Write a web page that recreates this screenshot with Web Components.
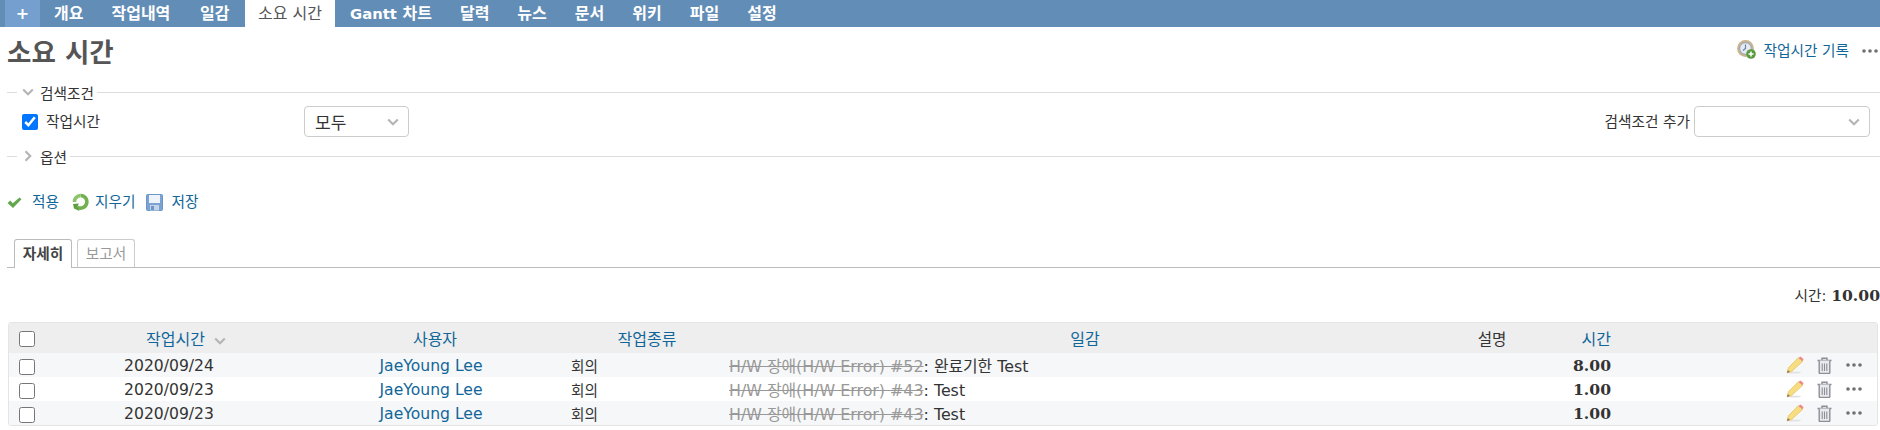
<!DOCTYPE html>
<html lang="ko">
<head>
<meta charset="utf-8">
<title>소요 시간</title>
<style>
  html, body { margin: 0; padding: 0; background: #fff; }
  body { font-family: "DejaVu Sans", "Noto Sans CJK KR", sans-serif; font-size: 14.67px; color: #333; overflow: hidden; }
</style>
</head>
<body>
<top-menu></top-menu>
<page-head></page-head>
<filter-group label="검색조건" open>
  <filter-row></filter-row>
</filter-group>
<filter-group label="옵션"></filter-group>
<query-actions></query-actions>
<view-tabs></view-tabs>
<total-line></total-line>
<time-table></time-table>

<script>
const icons = {
  chevronDown: `<svg width="12" height="8" viewBox="0 0 12 8"><path d="M1.200 1.500 6 6.200l4.800-4.700" fill="none" stroke="#b5b5b5" stroke-width="2.200"/></svg>`,
  chevronRight: `<svg width="8" height="12" viewBox="0 0 8 12"><path d="M1.500 1.200 6.200 6l-4.700 4.800" fill="none" stroke="#b5b5b5" stroke-width="2.200"/></svg>`,
  dots: `<svg width="16" height="4" viewBox="0 0 16 4"><g fill="#707070"><circle cx="2" cy="2" r="1.800"/><circle cx="8" cy="2" r="1.800"/><circle cx="14" cy="2" r="1.800"/></g></svg>`,
  clock: `<svg width="19" height="19" viewBox="0 0 19 19"><circle cx="8.500" cy="8.500" r="8.400" fill="#c9b48c"/><circle cx="8.500" cy="8.500" r="5.800" fill="#e4ebf4" stroke="#8ea5c4"/><path d="M8.500 4.500v4l-2.500 2" fill="none" stroke="#6b7f99" stroke-width="1.200"/><circle cx="14" cy="14" r="4.800" fill="#5c9a3e"/><path d="M14 11.500v5M11.500 14h5" stroke="#fff" stroke-width="1.500"/></svg>`,
  check: `<svg width="15" height="13" viewBox="0 0 15 13"><path d="M.5 7 3.300 4.600 5.800 7.200 12.500 1.500 14.500 3.200 6 12z" fill="#62a84e"/></svg>`,
  reload: `<svg width="17" height="19" viewBox="0 0 17 19"><path d="M8.500 2.500a6.300 6.300 0 1 1-3.200 11.700" fill="none" stroke="#72b050" stroke-width="3.600"/><path d="M8.500 2.500A6.300 6.300 0 0 0 2.400 9" fill="none" stroke="#8cc46a" stroke-width="3.600"/><path d="M1 11 6.800 10.500 5.500 14 7.500 18 2 15.500z" fill="#5f9f42"/></svg>`,
  save: `<svg width="17" height="17" viewBox="0 0 17 17"><rect x=".5" y=".5" width="16" height="16" rx="1" fill="#7aa3d4" stroke="#6a96c8"/><rect x="3" y="1" width="11" height="8" fill="#eef3f9"/><rect x="4" y="11" width="9" height="5.500" fill="#c4d3e6"/><rect x="5" y="12" width="3" height="4" fill="#6d96c8"/></svg>`,
  pencil: `<svg width="18" height="18" viewBox="0 0 18 18"><ellipse cx="8" cy="16.500" rx="7" ry="1" fill="#e2e2e2"/><path d="M12.500 1.500 16.500 5.500 5.500 15.500 1 17 2.500 11.500z" fill="#f7dd80" stroke="#e0c060" stroke-width=".7"/><path d="M12.500 2 14.500.5 17.500 3 16.500 5.500z" fill="#f08a8a"/><path d="M1 17 1.800 14 4 16z" fill="#8a7a50"/></svg>`,
  trash: `<svg width="15" height="17" viewBox="0 0 15 17"><g fill="none" stroke="#8e8e96" stroke-width="1.400"><path d="M.5 3.500h14M5 3.200V1.200h5v2"/><path d="M2.200 3.500v12a1 1 0 0 0 1 1h8.600a1 1 0 0 0 1-1v-12" fill="#e8eaee"/><path d="M5.200 6.500v7.500M7.500 6.500v7.500M9.800 6.500v7.500" stroke-width="1.100"/></g></svg>`
};

const tpl = (html) => {
  const t = document.createElement("template");
  t.innerHTML = html;
  return t;
};

class Base extends HTMLElement {
  constructor() {
    super();
    this.attachShadow({ mode: "open" });
    this.shadowRoot.append(this.constructor.template.content.cloneNode(true));
  }
}

class TopMenu extends Base {
  static template = tpl(`
    <style>
      :host { display: flex; height: 27px; background: #628db6; padding-left: 5px; font: bold 16px "DejaVu Sans", "Noto Sans CJK KR", sans-serif; line-height: 27px; color: #fff; box-sizing: border-box; }
      a { display: block; padding: 0 14px; white-space: nowrap; }
      .new { background: #759fcf; padding: 0; width: 35px; text-align: center; }
      .wide { padding-right: 15.700px; }
      .on { background: #fff; color: #555; font-weight: normal; box-sizing: border-box; width: 90px; padding: 0; text-align: center; margin: 0 1px 0 1.600px; }
      .lat { font-size: 14.800px; }
    </style>
    <a class="new">+</a><a>개요</a><a class="wide">작업내역</a><a>일감</a><a class="on">소요 시간</a><a><span class="lat">Gantt</span> 차트</a><a>달력</a><a>뉴스</a><a>문서</a><a>위키</a><a>파일</a><a>설정</a>`);
}

class PageHead extends Base {
  static template = tpl(`
    <style>
      :host { display: flex; justify-content: space-between; height: 52px; padding: 8px 2px 0 7px; box-sizing: border-box; }
      h2 { margin: 0; font: bold 26.500px/36px "DejaVu Sans", "Noto Sans CJK KR", sans-serif; color: #555; }
      .right { display: flex; align-items: center; height: 26px; margin-top: 1px; }
      a { color: #169; margin: 0 13px 0 7px; }
      svg { display: block; }
      .dots { margin-top: 4px; }
    </style>
    <h2>소요 시간</h2>
    <div class="right">${icons.clock}<a>작업시간 기록</a><span class="dots">${icons.dots}</span></div>`);
}

class FilterGroup extends Base {
  static template = tpl(`
    <style>
      :host { display: block; padding-left: 7px; }
      .legend { display: flex; align-items: center; height: 26px; color: #333; }
      .tick { width: 10px; height: 1px; background: #ddd; }
      .rule { flex: 1; height: 1px; background: #ddd; margin-left: 3px; }
      .arrow { box-sizing: border-box; width: 23px; padding-right: 1px; display: flex; justify-content: center; }
      svg { display: block; }
    </style>
    <div class="legend"><span class="tick"></span><span class="arrow"></span><span class="text"></span><span class="rule"></span></div>
    <slot></slot>`);

  connectedCallback() {
    const root = this.shadowRoot;
    root.querySelector(".text").textContent = this.getAttribute("label");
    root.querySelector(".arrow").innerHTML = this.hasAttribute("open") ? icons.chevronDown : icons.chevronRight;
  }
}

class FilterRow extends Base {
  static template = tpl(`
    <style>
      :host { display: flex; align-items: center; height: 33px; margin: 0 0 5px -7px; }
      input { width: 16px; height: 16px; margin: 0 8px 0 22px; accent-color: #0075ff; }
      .name { width: 258px; padding-bottom: 3px; }
      .sel { box-sizing: border-box; height: 31px; border: 1px solid #ccc; border-radius: 4px; display: flex; align-items: center; justify-content: space-between; padding: 0 9px 0 10px; background: #fff; }
      .op { width: 105px; font-size: 17px; }
      .add { margin-left: auto; padding-bottom: 3px; }
      .pick { width: 176px; margin: 0 10px 0 4px; }
      svg { display: block; }
    </style>
    <input type="checkbox" checked><span class="name">작업시간</span>
    <div class="sel op"><span>모두</span>${icons.chevronDown}</div>
    <span class="add">검색조건 추가</span>
    <div class="sel pick"><span></span>${icons.chevronDown}</div>`);
}

class QueryActions extends Base {
  static template = tpl(`
    <style>
      :host { display: flex; align-items: center; height: 24px; margin-top: 21px; padding-left: 7px; color: #169; }
      a { padding-bottom: 3px; }
      a.a { margin: 0 13px 0 10px; }
      a.b { margin: 0 11px 0 6px; }
      a.c { margin: 0 0 0 8px; }
      svg { display: block; }
    </style>
    ${icons.check}<a class="a">적용</a>${icons.reload}<a class="b">지우기</a>${icons.save}<a class="c">저장</a>`);
}

class ViewTabs extends Base {
  static template = tpl(`
    <style>
      :host { display: flex; align-items: flex-end; gap: 5px; height: 29px; margin: 24px 0 0 7px; padding-left: 7px; border-bottom: 1px solid #bbb; }
      a { box-sizing: border-box; width: 58px; height: 28px; border: 1px solid #ccc; border-bottom: 0; border-radius: 3px 3px 0 0; text-align: center; line-height: 27px; color: #999; background: #fff; }
      .on { color: #444; font-weight: bold; border-color: #bbb; height: 29px; margin-bottom: -1px; padding-bottom: 1px; }
    </style>
    <a class="on">자세히</a><a>보고서</a>`);
}

class TotalLine extends Base {
  static template = tpl(`
    <style>
      :host { display: block; height: 54px; box-sizing: border-box; padding-top: 18px; text-align: right; line-height: 20px; }
      b { font: bold 15.600px "DejaVu Serif", serif; }
    </style>
    시간: <b>10.00</b>`);
}

class TimeTable extends Base {
  static template = tpl(`
    <style>
      :host { display: block; margin: 0 2px 0 8px; border: 1px solid #e4e4e4; border-radius: 3px; overflow: hidden; --cols: 34px 252px 272px 160px 748px 34px 106px 1fr; }
      .h { display: grid; grid-template-columns: var(--cols); align-items: center; height: 30px; background: #eee; color: #169; font-size: 16px; }
      input { width: 16px; height: 16px; margin: 2px 0 0 10px; display: block; }
      .c { text-align: center; white-space: nowrap; }
      .dark { color: #333; font-size: 15.600px; }
      .hrs { text-align: right; padding-right: 4px; }
      .sort { display: inline-block; margin-left: 9px; }
      .date { padding-left: 34px; }
      .user { padding-left: 8px; }
      .issue { padding-right: 32px; }
      svg { display: block; }
    </style>
    <div class="h">
      <span><input type="checkbox"></span>
      <span class="c date">작업시간<span class="sort">${icons.chevronDown}</span></span>
      <span class="c user">사용자</span>
      <span class="c">작업종류</span>
      <span class="c issue">일감</span>
      <span class="c dark">설명</span>
      <span class="hrs">시간</span>
      <span></span>
    </div>
    <time-row date="2020/09/24" issue="H/W 장애(H/W Error) #52" title="완료기한 Test" hours="8.00"></time-row>
    <time-row date="2020/09/23" issue="H/W 장애(H/W Error) #43" title="Test" hours="1.00"></time-row>
    <time-row date="2020/09/23" issue="H/W 장애(H/W Error) #43" title="Test" hours="1.00"></time-row>`);
}

class TimeRow extends Base {
  static template = tpl(`
    <style>
      :host { display: grid; grid-template-columns: var(--cols); align-items: center; height: 24px; font-size: 15.600px; }
      :host(:nth-of-type(odd)) { background: #f6f7f8; }
      input { width: 16px; height: 16px; margin: 4px 0 0 10px; display: block; }
      .c { text-align: center; padding-top: 2px; }
      .user { color: #169; }
      .kind { padding-left: 4px; font-size: 14.670px; }
      .hrs { text-align: right; padding-right: 4px; font: bold 15.600px "DejaVu Serif", serif; }
      .sub { white-space: nowrap; padding-left: 2px; font-size: 15.850px; }
      s { color: #999; }
      .act { display: flex; align-items: center; justify-content: flex-end; padding-right: 15px; }
      svg { display: block; }
      .trash { margin: 0 14px 0 13px; }
    </style>
    <span><input type="checkbox"></span>
    <span class="c date"></span>
    <span class="c user">JaeYoung Lee</span>
    <span class="kind">회의</span>
    <span class="sub"><s class="issue"></s>: <span class="title"></span></span>
    <span></span>
    <span class="hrs"></span>
    <span class="act">${icons.pencil}<span class="trash">${icons.trash}</span>${icons.dots}</span>`);

  connectedCallback() {
    const root = this.shadowRoot;
    root.querySelector(".date").textContent = this.getAttribute("date");
    root.querySelector(".issue").textContent = this.getAttribute("issue");
    root.querySelector(".title").textContent = this.getAttribute("title");
    root.querySelector(".hrs").textContent = this.getAttribute("hours");
  }
}

customElements.define("top-menu", TopMenu);
customElements.define("page-head", PageHead);
customElements.define("filter-group", FilterGroup);
customElements.define("filter-row", FilterRow);
customElements.define("query-actions", QueryActions);
customElements.define("view-tabs", ViewTabs);
customElements.define("total-line", TotalLine);
customElements.define("time-row", TimeRow);
customElements.define("time-table", TimeTable);
</script>
</body>
</html>
